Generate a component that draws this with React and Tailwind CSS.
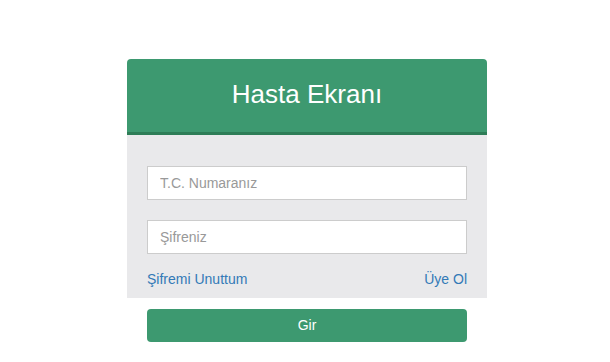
export default function App() {
  return (
    <div className="min-h-[362px] bg-white pt-[59px] font-['Liberation_Sans',Arial,sans-serif]">
      <div className="ml-[127px] w-[360px]">
        <div className="flex h-[76px] items-center justify-center rounded-t-[4px] border-b-[3px] border-[#2e7d57] bg-[#3d9970] pb-[2px]">
          <h1 className="text-[26px] text-white">Hasta Ekranı</h1>
        </div>
        <div className="bg-[#e9e9eb] px-5 pt-[31px] pb-[9px]">
          <input
            type="text"
            placeholder="T.C. Numaranız"
            className="block h-[34px] w-full border border-[#ccc] bg-white px-3 text-[14px] text-[#555] outline-none placeholder:text-[#999]"
          />
          <input
            type="password"
            placeholder="Şifreniz"
            className="mt-[20px] block h-[34px] w-full border border-[#ccc] bg-white px-3 text-[14px] text-[#555] outline-none placeholder:text-[#999]"
          />
          <div className="mt-[15px] flex justify-between text-[14px] leading-5 text-[#337ab7]">
            <a href="#">Şifremi Unuttum</a>
            <a href="#">Üye Ol</a>
          </div>
        </div>
        <div className="px-5 pt-[11px]">
          <button className="h-[33px] w-full rounded-[4px] bg-[#3d9970] text-[14px] text-white">Gir</button>
        </div>
      </div>
    </div>
  );
}
